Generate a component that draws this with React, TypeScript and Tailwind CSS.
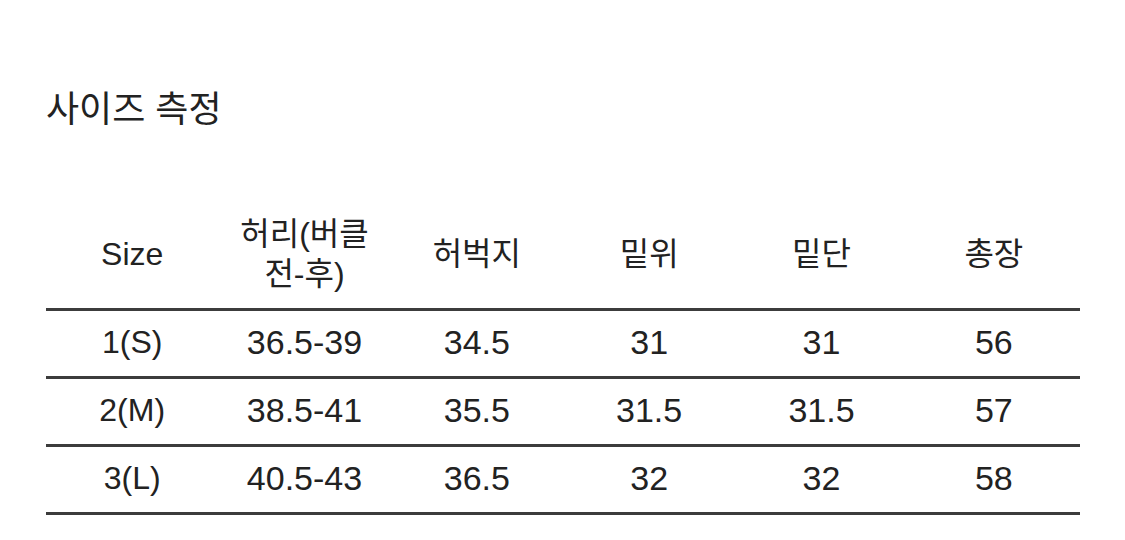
import React from "react";

const rows = [
  ["1(S)", "36.5-39", "34.5", "31", "31", "56"],
  ["2(M)", "38.5-41", "35.5", "31.5", "31.5", "57"],
  ["3(L)", "40.5-43", "36.5", "32", "32", "58"],
];

const headers = ["Size", "허리(버클 전-후)", "허벅지", "밑위", "밑단", "총장"];

export default function App() {
  return (
    <div
      className="w-[1125px] h-[540px] bg-white text-[#222222] overflow-hidden"
      style={{ fontFamily: '"Liberation Sans", "Noto Sans CJK KR", sans-serif' }}
    >
      <div className="pl-[46px] pr-[45px] pt-[84px]">
        <h1 className="text-[36px] leading-[52px] font-normal">사이즈 측정</h1>
        <table className="mt-[78px] w-[1034px] table-fixed border-collapse">
          <thead>
            <tr className="border-b-[3px] border-[#3c3c3c]">
              {headers.map((h, i) => (
                <th
                  key={i}
                  className="px-[12px] pb-[14px] font-normal text-[32px] leading-[40px] text-center align-middle break-keep"
                >
                  {h}
                </th>
              ))}
            </tr>
          </thead>
          <tbody>
            {rows.map((r, ri) => (
              <tr key={ri} className="border-b-[3px] border-[#3c3c3c] h-[68px]">
                {r.map((c, ci) => (
                  <td
                    key={ci}
                    className={`text-center align-middle leading-[40px] p-0 pb-[4px] ${
                      ci === 0 ? "text-[32px]" : "text-[34px]"
                    }`}
                  >
                    {c}
                  </td>
                ))}
              </tr>
            ))}
          </tbody>
        </table>
      </div>
    </div>
  );
}
